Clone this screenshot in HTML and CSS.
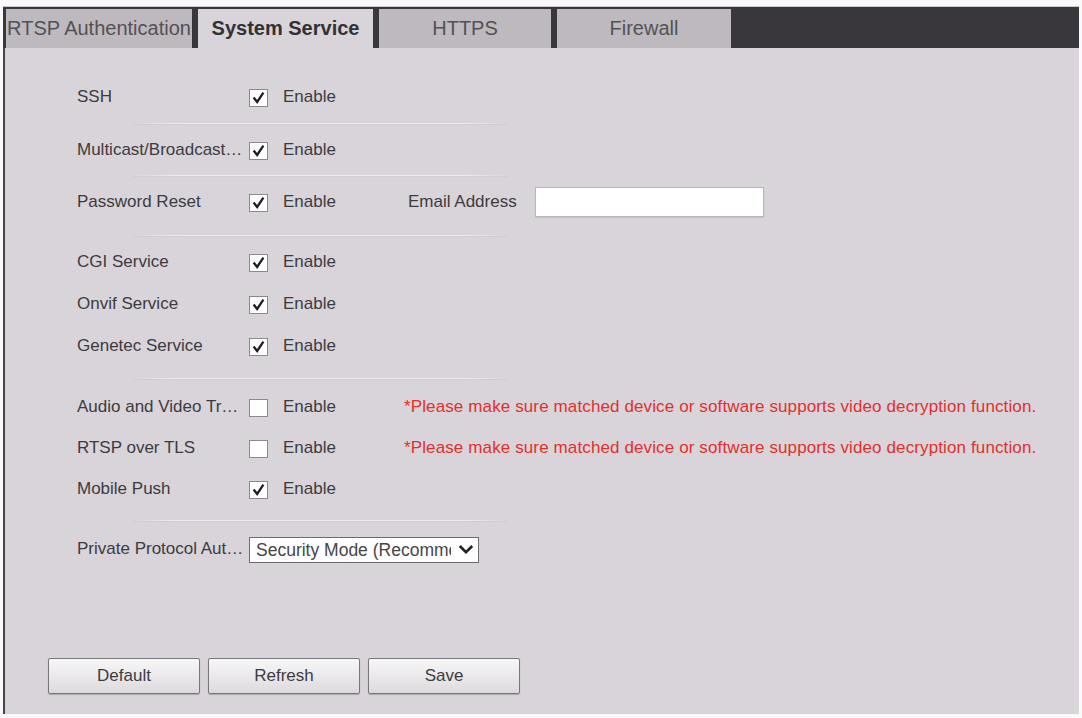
FILE: index.html
```html
<!DOCTYPE html>
<html lang="en">

<head>
  <meta charset="UTF-8">
  <meta name="viewport" content="width=device-width, initial-scale=1.0">
  <title>System Service</title>
  <link rel="stylesheet" href="styles.css">
</head>

<body>
  <div class="panel">
    <div class="tabs">
      <div class="tab tab-rtsp">RTSP Authentication</div>
      <div class="tab tab-service active">System Service</div>
      <div class="tab tab-https">HTTPS</div>
      <div class="tab tab-firewall">Firewall</div>
    </div>

    <div class="content">
      <form class="settings">
        <div class="row">
          <span class="label">SSH</span>
          <span class="option"><span class="box"><svg viewBox="0 0 18 18"><path d="M3.5 8.5 L7.5 13.5 L14.5 3" /></svg></span>Enable</span>
        </div>
        <div class="sep"></div>

        <div class="row">
          <span class="label">Multicast/Broadcast Search</span>
          <span class="option"><span class="box"><svg viewBox="0 0 18 18"><path d="M3.5 8.5 L7.5 13.5 L14.5 3" /></svg></span>Enable</span>
        </div>
        <div class="sep close"></div>

        <div class="row">
          <span class="label">Password Reset</span>
          <span class="option"><span class="box"><svg viewBox="0 0 18 18"><path d="M3.5 8.5 L7.5 13.5 L14.5 3" /></svg></span>Enable</span>
          <span class="field-label">Email Address</span>
          <input type="text" class="email">
        </div>
        <div class="sep wide"></div>

        <div class="row">
          <span class="label">CGI Service</span>
          <span class="option"><span class="box"><svg viewBox="0 0 18 18"><path d="M3.5 8.5 L7.5 13.5 L14.5 3" /></svg></span>Enable</span>
        </div>
        <div class="row">
          <span class="label">Onvif Service</span>
          <span class="option"><span class="box"><svg viewBox="0 0 18 18"><path d="M3.5 8.5 L7.5 13.5 L14.5 3" /></svg></span>Enable</span>
        </div>
        <div class="row">
          <span class="label">Genetec Service</span>
          <span class="option"><span class="box"><svg viewBox="0 0 18 18"><path d="M3.5 8.5 L7.5 13.5 L14.5 3" /></svg></span>Enable</span>
        </div>
        <div class="sep loose"></div>

        <div class="row tight">
          <span class="label">Audio and Video Transmission Encryption</span>
          <span class="option"><span class="box"></span>Enable</span>
          <span class="note">*Please make sure matched device or software supports video decryption function.</span>
        </div>
        <div class="row tight">
          <span class="label">RTSP over TLS</span>
          <span class="option"><span class="box"></span>Enable</span>
          <span class="note">*Please make sure matched device or software supports video decryption function.</span>
        </div>
        <div class="row tight">
          <span class="label">Mobile Push</span>
          <span class="option"><span class="box"><svg viewBox="0 0 18 18"><path d="M3.5 8.5 L7.5 13.5 L14.5 3" /></svg></span>Enable</span>
        </div>
        <div class="sep loose"></div>

        <div class="row">
          <span class="label">Private Protocol Authentication Mode</span>
          <span class="select-wrap">
            <select class="mode">
              <option>Security Mode (Recommended)</option>
              <option>Compatible Mode</option>
            </select>
            <svg class="chevron" viewBox="0 0 18 12"><path d="M2 2 L9 9 L16 2" /></svg>
          </span>
        </div>
      </form>

      <div class="actions">
        <button type="button">Default</button>
        <button type="button">Refresh</button>
        <button type="button">Save</button>
      </div>
    </div>
  </div>
</body>

</html>
```

FILE: styles.css
```css
body {
  margin: 0;
  background-color: #fafafa;
  font-family: "Liberation Sans", Arial, sans-serif;
}

.panel {
  margin: 6px 3px 0 3px;
  height: 707px;
  display: flex;
  flex-direction: column;
  border-top: 1px solid #c9c9c9;
}

/* tab strip */
.tabs {
  display: flex;
  gap: 6px;
  height: 41px;
  padding: 2px 0 0 3px;
  box-sizing: border-box;
  background-color: #3a373c;
}

.tab {
  height: 39px;
  line-height: 39px;
  text-align: center;
  white-space: nowrap;
  overflow: hidden;
  font-size: 20px;
  color: #545155;
  background-color: #bdb9be;
}

.tab-rtsp {
  width: 186px;
}

.tab-service {
  width: 175px;
}

.tab-https {
  width: 172px;
}

.tab-firewall {
  width: 174px;
}

.tab.active {
  background-color: #d8d4d9;
  color: #333134;
  font-weight: bold;
}

/* page body */
.content {
  flex: 1;
  display: flex;
  flex-direction: column;
  background-color: #d8d4d9;
  border-left: 2px solid #48454a;
  border-right: 5px solid #dbd8dc;
  padding-top: 28px;
}

.settings {
  padding-left: 72px;
  font-size: 17px;
  color: #3d3b3f;
}

.row {
  display: flex;
  align-items: center;
  height: 42px;
  white-space: nowrap;
}

.row.tight {
  height: 41px;
}

.label {
  width: 168px;
  margin-right: 4px;
  overflow: hidden;
  text-overflow: ellipsis;
}

.option {
  display: flex;
  align-items: center;
  width: 155px;
}

.box {
  width: 19px;
  height: 18px;
  margin-right: 15px;
  margin-top: 2px;
  box-sizing: border-box;
  border: 1px solid #8c898d;
  background-color: #fff;
}

.box svg {
  display: block;
  width: 17px;
  height: 16px;
}

.box path {
  fill: none;
  stroke: #1f1e20;
  stroke-width: 2.6;
}

.sep {
  width: 375px;
  height: 1px;
  margin: 5px 0 5px 56px;
  background: linear-gradient(to right, rgba(238, 236, 239, 0), #eeecef 12%, #eeecef 88%, rgba(238, 236, 239, 0));
  box-shadow: 0 1px 0 rgba(200, 196, 201, 0.5);
}

.sep.close {
  margin-top: 4px;
}

.sep.wide {
  margin-top: 12px;
}

.sep.loose {
  margin-top: 11px;
  margin-bottom: 7px;
}

.field-label {
  width: 127px;
  margin-left: 4px;
}

.email {
  width: 229px;
  height: 30px;
  box-sizing: border-box;
  border: 1px solid #b9b6ba;
  background-color: #fff;
  box-shadow: 0 1px 1px rgba(0, 0, 0, 0.08);
}

.note {
  color: #e42f2e;
  font-size: 17px;
  letter-spacing: 0.12px;
}

.select-wrap {
  position: relative;
  display: block;
  width: 230px;
  height: 26px;
  margin-top: 1px;
}

.mode {
  appearance: none;
  width: 230px;
  height: 26px;
  box-sizing: border-box;
  margin: 0;
  padding: 0 27px 0 6px;
  border: 1px solid #6e6b6f;
  border-radius: 0;
  background-color: #fff;
  font-family: "Liberation Sans", Arial, sans-serif;
  font-size: 17.5px;
  color: #47454a;
}

.chevron {
  position: absolute;
  right: 5px;
  top: 7px;
  width: 16px;
  height: 11px;
  pointer-events: none;
}

.chevron path {
  fill: none;
  stroke: #232224;
  stroke-width: 3;
}

.actions {
  display: flex;
  gap: 8px;
  margin-top: 88px;
  padding-left: 43px;
}

.actions button {
  width: 152px;
  height: 36px;
  border: 1px solid #7a777b;
  border-radius: 2px;
  background: linear-gradient(#f8f7f8, #dcdadd);
  box-shadow: 0 1px 1px rgba(0, 0, 0, 0.2);
  font-family: "Liberation Sans", Arial, sans-serif;
  font-size: 17px;
  color: #3d3b3f;
  cursor: pointer;
}

.actions button:hover {
  background: linear-gradient(#ffffff, #e4e2e5);
}
```
